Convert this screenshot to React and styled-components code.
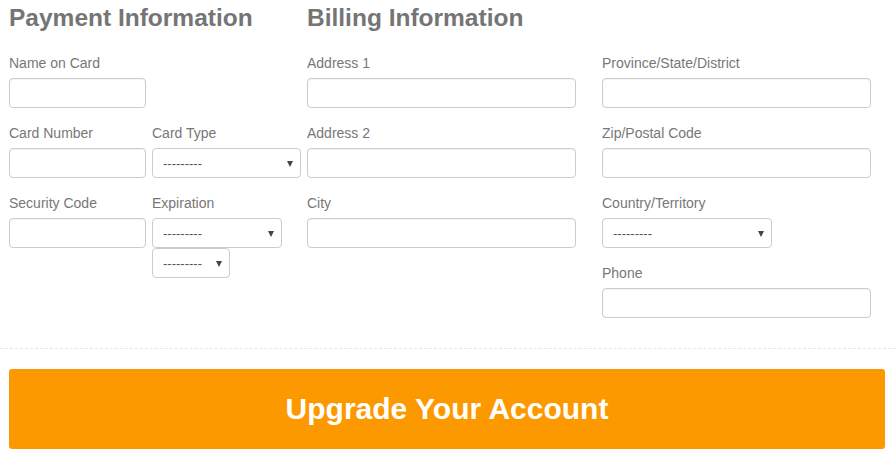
import React from 'react';
import styled, { createGlobalStyle } from 'styled-components';

const GlobalStyle = createGlobalStyle`
  body {
    margin: 0;
    background: #ffffff;
    font-family: "Liberation Sans", Arial, sans-serif;
  }
`;

const Form = styled.form`
  display: flex;
  gap: 6px;
  padding: 5px 9px 0;
`;

const Section = styled.div`
  width: ${(p) => p.width}px;
`;

const Heading = styled.h2`
  margin: 0 0 23px;
  font-size: 24.5px;
  line-height: 26px;
  font-weight: bold;
  color: #757575;
  white-space: nowrap;
`;

const Grid = styled.div`
  display: grid;
  grid-template-columns: ${(p) => p.cols};
  column-gap: ${(p) => p.gap}px;
  align-items: start;
`;

const Column = styled.div`
  display: flex;
  flex-direction: column;
`;

const Field = styled.div`
  display: flex;
  flex-direction: column;
  align-items: flex-start;
  margin-bottom: 16px;
`;

const Label = styled.label`
  font-size: 14px;
  line-height: 19px;
  color: #777777;
  margin-bottom: 5px;
`;

const Input = styled.input`
  box-sizing: border-box;
  width: ${(p) => p.width || 137}px;
  height: 30px;
  border: 1px solid #cccccc;
  border-radius: 4px;
  box-shadow: inset 0 1px 1px rgba(0, 0, 0, 0.05);
  padding: 4px 10px;
  font-family: inherit;
  font-size: 14px;
  color: #555;
  background: #fff;
  outline: none;
`;

const SelectWrap = styled.div`
  position: relative;
  width: ${(p) => p.width}px;
  height: 30px;
`;

const NativeSelect = styled.select`
  appearance: none;
  -webkit-appearance: none;
  box-sizing: border-box;
  width: 100%;
  height: 30px;
  border: 1px solid #cccccc;
  border-radius: 4px;
  background: #fff;
  padding: 0 20px 0 10px;
  font-family: inherit;
  font-size: 13px;
  color: #555;
  outline: none;
`;

const Arrow = styled.span`
  position: absolute;
  right: 8px;
  top: 13px;
  width: 0;
  height: 0;
  border-left: 3px solid transparent;
  border-right: 3px solid transparent;
  border-top: 6px solid #444;
  pointer-events: none;
`;

const Separator = styled.hr`
  margin: 14px 0 20px;
  border: 0;
  border-top: 1px dashed #e6e6e6;
`;

const SubmitButton = styled.button`
  display: block;
  box-sizing: border-box;
  width: 876px;
  height: 80px;
  margin: 0 0 0 9px;
  border: 0;
  border-radius: 3px;
  background: #fd9900;
  color: #ffffff;
  font-family: inherit;
  font-size: 30px;
  font-weight: bold;
  cursor: pointer;
`;

const Select = ({ width }) => (
  <SelectWrap width={width}>
    <NativeSelect defaultValue="">
      <option value="">---------</option>
    </NativeSelect>
    <Arrow />
  </SelectWrap>
);

const TextField = ({ label, width }) => (
  <Field>
    <Label>{label}</Label>
    <Input type="text" width={width} />
  </Field>
);

const App = () => {
  return (
    <>
      <GlobalStyle />
      <Form onSubmit={(e) => e.preventDefault()}>
        <Section width={292}>
          <Heading>Payment Information</Heading>
          <Grid cols="137px 149px" gap={6}>
            <TextField label="Name on Card" />
            <div />
            <TextField label="Card Number" />
            <Field>
              <Label>Card Type</Label>
              <Select width={149} />
            </Field>
            <TextField label="Security Code" />
            <Field>
              <Label>Expiration</Label>
              <Select width={130} />
              <Select width={78} />
            </Field>
          </Grid>
        </Section>
        <Section width={564}>
          <Heading>Billing Information</Heading>
          <Grid cols="269px 269px" gap={26}>
            <Column>
              <TextField label="Address 1" width={269} />
              <TextField label="Address 2" width={269} />
              <TextField label="City" width={269} />
            </Column>
            <Column>
              <TextField label="Province/State/District" width={269} />
              <TextField label="Zip/Postal Code" width={269} />
              <Field>
                <Label>Country/Territory</Label>
                <Select width={170} />
              </Field>
              <TextField label="Phone" width={269} />
            </Column>
          </Grid>
        </Section>
      </Form>
      <Separator />
      <SubmitButton type="submit">Upgrade Your Account</SubmitButton>
    </>
  );
};

export default App;
